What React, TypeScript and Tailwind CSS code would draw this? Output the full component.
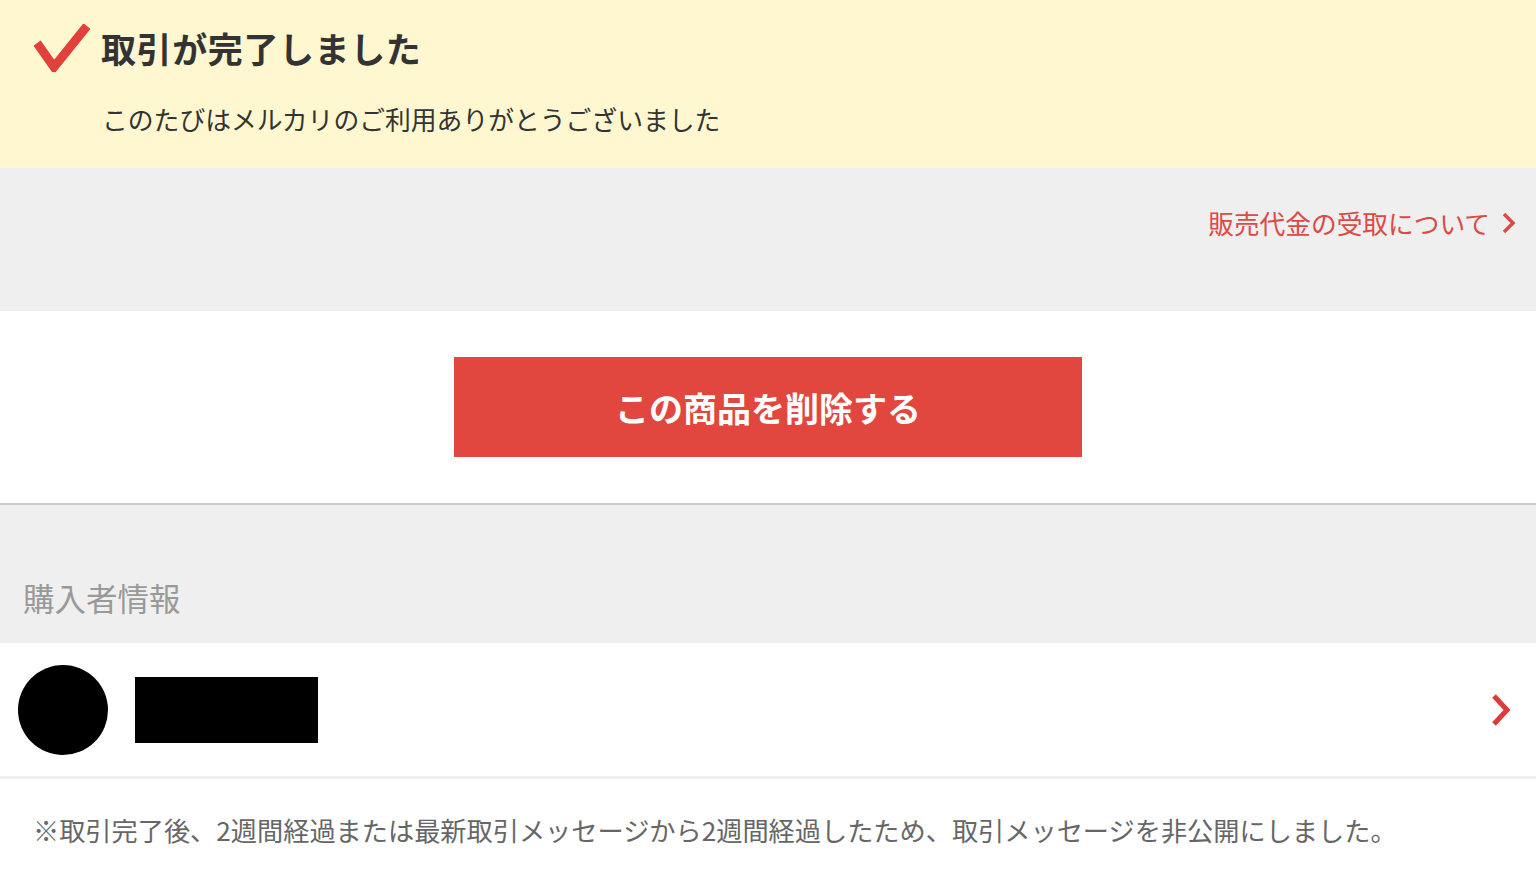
import React from "react";

const font = { fontFamily: '"Noto Sans CJK JP", "Noto Sans", sans-serif' };

export default function App() {
  return (
    <div className="w-[1536px] h-[886px] bg-white overflow-hidden" style={font}>
      {/* Banner */}
      <div className="h-[168px] bg-[#fff7d0] flex flex-col">
        <div className="flex items-center h-[94px] pl-[34px]">
          <svg width="56" height="48" viewBox="0 0 56 48" className="mt-[2px]">
            <path d="M3 19 L20 43 L53 2" fill="none" stroke="#e2403a" strokeWidth="9" strokeLinejoin="miter" />
          </svg>
          <span className="ml-[11px] text-[35px] font-bold text-[#333] leading-none tracking-[0.6px]">取引が完了しました</span>
        </div>
        <div className="pl-[102px] mt-[12px] text-[25.8px] text-[#333] leading-none">このたびはメルカリのご利用ありがとうございました</div>
      </div>

      {/* Gray link section */}
      <div className="h-[143px] bg-[#efefef] flex justify-end items-start pt-[40px] pr-[20px]">
        <div className="flex items-center gap-[12px] text-[#dc4a44]">
          <span className="text-[25.7px] leading-[30px]">販売代金の受取について</span>
          <svg width="14" height="22" viewBox="0 0 14 22">
            <path d="M2 2 L11 11 L2 20" fill="none" stroke="#dc4a44" strokeWidth="3.5" />
          </svg>
        </div>
      </div>

      {/* Button section */}
      <div className="h-[192px] bg-white flex justify-center items-start pt-[46px]">
        <button className="w-[628px] h-[100px] bg-[#e2473f] text-white text-[34px] font-bold flex items-center justify-center">
          この商品を削除する
        </button>
      </div>
      <div className="h-[2px] bg-[#cccccc]" />

      {/* Buyer info header */}
      <div className="h-[138px] bg-[#efefef] flex items-end pb-[30px] pl-[23px]">
        <span className="text-[31.5px] text-[#999999] leading-none">購入者情報</span>
      </div>

      {/* Buyer row */}
      <div className="h-[133px] bg-white flex items-center pl-[18px] pr-[24px]">
        <div className="w-[90px] h-[90px] rounded-full bg-black" />
        <div className="ml-[27px] w-[183px] h-[66px] bg-black" />
        <div className="flex-1" />
        <svg width="22" height="34" viewBox="0 0 22 34">
          <path d="M4 3 L17 17 L4 31" fill="none" stroke="#dc3b36" strokeWidth="5" />
        </svg>
      </div>
      <div className="h-[3px] bg-[#eeeeee]" />

      {/* Footer note */}
      <div className="pt-[38px] pl-[33px] text-[26.2px] text-[#666666] leading-none">
        ※取引完了後、2週間経過または最新取引メッセージから2週間経過したため、取引メッセージを非公開にしました。
      </div>
    </div>
  );
}
